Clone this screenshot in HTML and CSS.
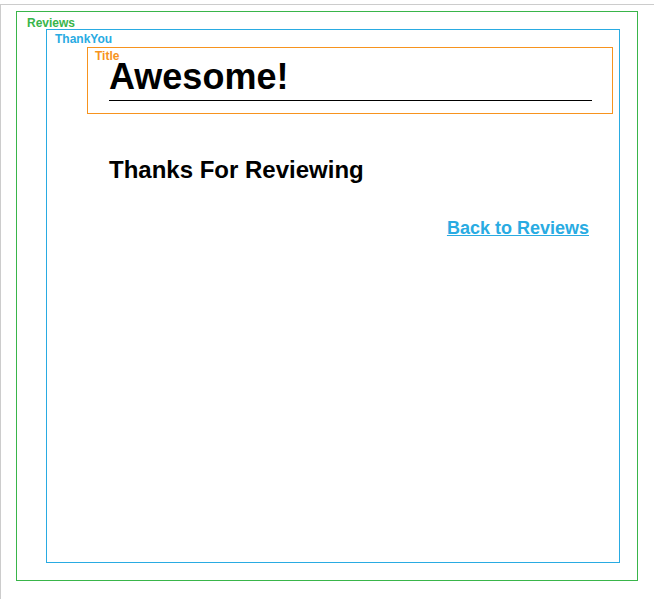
FILE: index.html
```html
<!DOCTYPE html>
<html lang="en">
<head>
  <meta charset="UTF-8">
  <meta name="viewport" content="width=device-width, initial-scale=1.0">
  <title>Thank You</title>
  <link rel="stylesheet" href="styles.css">
</head>
<body>
  <div class="frame">
    <!-- Reviews -->
    <div class="box reviews">
      <span class="box-label">Reviews</span>

      <!-- ThankYou -->
      <div class="box thank-you">
        <span class="box-label">ThankYou</span>

        <!-- Title -->
        <div class="box title">
          <span class="box-label">Title</span>
          <h1>Awesome!</h1>
        </div>

        <div class="thanks">
          <h2>Thanks For Reviewing</h2>
          <div class="back">
            <a href="#">Back to Reviews</a>
          </div>
        </div>
      </div>
    </div>
  </div>
</body>
</html>
```

FILE: styles.css
```css
/* Basic styling */
body {
  font-family: "Liberation Sans", Arial, Helvetica, sans-serif;
  margin: 0;
  padding: 0;
  background-color: #fff;
  color: #000;
}

/* Outer frame */
.frame {
  margin-top: 4px;
  border-top: 1px solid #cccccc;
  border-left: 1px solid #cccccc;
  padding: 6px 0 0 15px;
  height: 600px;
}

/* Component boxes */
.box {
  position: relative;
  box-sizing: border-box;
}

.box-label {
  position: absolute;
  font-size: 12px;
  line-height: 14px;
  font-weight: bold;
  white-space: nowrap;
}

.reviews {
  width: 622px;
  height: 570px;
  border: 1px solid #39b54a;
  padding: 17px 17px 17px 29px;
}

.reviews > .box-label {
  top: 4px;
  left: 10px;
  color: #39b54a;
}

.thank-you {
  height: 534px;
  border: 1px solid #29abe2;
  padding: 17px 6px 0 40px;
}

.thank-you > .box-label {
  top: 2px;
  left: 8px;
  color: #29abe2;
}

.title {
  border: 1px solid #f7931e;
  padding: 8px 20px 12px 21px;
}

.title > .box-label {
  top: 1px;
  left: 7px;
  color: #f7931e;
}

.title h1 {
  margin: 0;
  font-size: 36px;
  line-height: 41px;
  font-weight: bold;
  padding-bottom: 3px;
  border-bottom: 1px solid #000;
}

/* Thanks text */
.thanks {
  padding: 42px 22px 0 22px;
}

.thanks h2 {
  margin: 0;
  font-size: 24px;
  line-height: 28px;
  font-weight: bold;
}

.back {
  margin-top: 34px;
  text-align: right;
  padding-right: 2px;
  font-size: 18px;
  line-height: 21px;
  font-weight: bold;
}

.back a {
  color: #29abe2;
}
```
